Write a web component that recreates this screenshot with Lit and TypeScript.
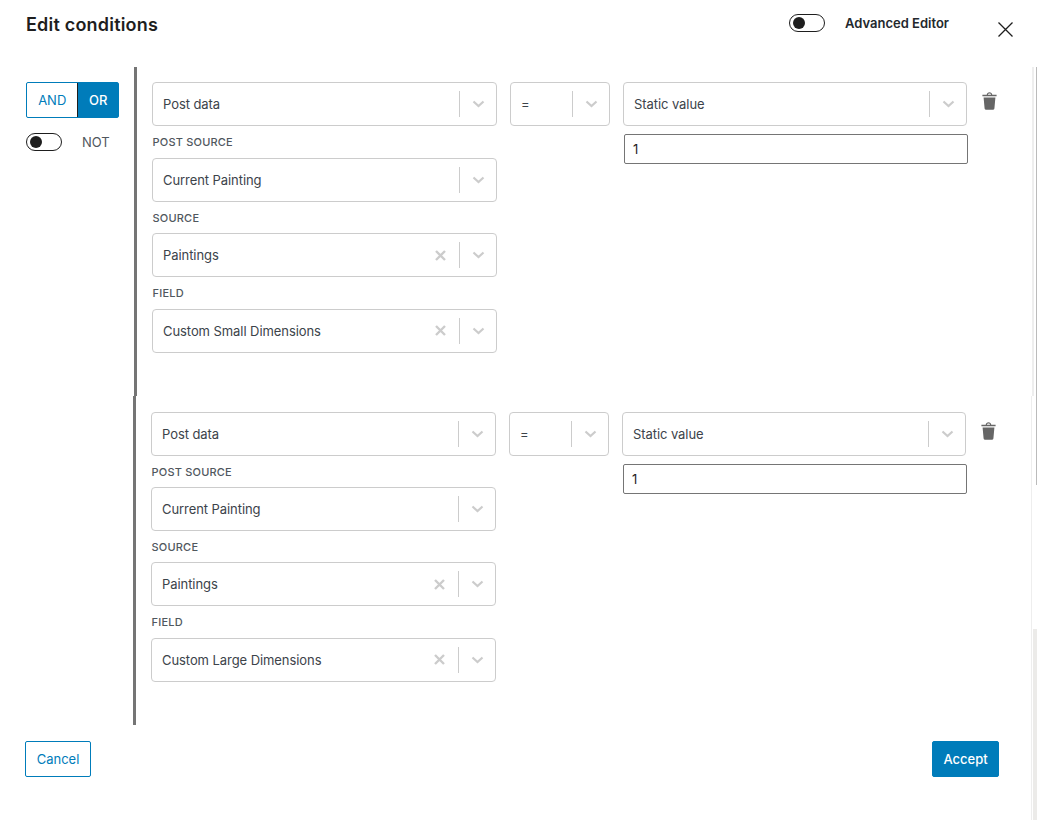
import { LitElement, html, css, nothing } from 'lit';
import { customElement, property } from 'lit/decorators.js';

@customElement('cond-select')
export class CondSelect extends LitElement {
  @property() value = '';
  @property({ type: Boolean }) clearable = false;

  static styles = css`
    :host {
      display: flex;
      align-items: center;
      box-sizing: border-box;
      height: 44px;
      padding: 0 11px 0 10px;
      border: 1px solid #ccc;
      border-radius: 4px;
      background: #fff;
      color: #3c434a;
      font-size: 13px;
      letter-spacing: -0.07px;
    }
    .val {
      flex: 1;
      white-space: nowrap;
    }
    .clear {
      display: block;
      margin-right: 13px;
    }
    .sep {
      width: 1px;
      height: 26px;
      background: #ccc;
      margin-right: 12px;
    }
    .arrow {
      display: block;
    }
  `;

  render() {
    return html`
      <span class="val">${this.value}</span>
      ${this.clearable
        ? html`<svg class="clear" width="11" height="11" viewBox="0 0 11 11">
            <path d="M1 1l9 9M10 1l-9 9" stroke="#ccc" stroke-width="2.4" fill="none" />
          </svg>`
        : nothing}
      <span class="sep"></span>
      <svg class="arrow" width="13" height="8" viewBox="0 0 13 8">
        <path d="M1.5 1.5l5 4.6 5-4.6" stroke="#ccc" stroke-width="2.2" fill="none" />
      </svg>
    `;
  }
}

@customElement('cond-toggle')
export class CondToggle extends LitElement {
  static styles = css`
    :host {
      display: block;
      box-sizing: border-box;
      width: 36px;
      height: 18px;
      padding: 2px;
      border: 1px solid #1e1e1e;
      border-radius: 9px;
      background: #fff;
    }
    i {
      display: block;
      width: 12px;
      height: 12px;
      margin-left: 1px;
      border-radius: 50%;
      background: #1e1e1e;
    }
  `;

  render() {
    return html`<i></i>`;
  }
}

@customElement('cond-group')
export class CondGroup extends LitElement {
  @property() field = '';

  static styles = css`
    :host {
      display: grid;
      grid-template-columns: 345px 100px 345px 30px;
      column-gap: 13px;
      align-items: start;
      box-sizing: border-box;
      height: 329.2px;
      padding-top: 15.4px;
      padding-left: 15px;
      border-left: 3px solid #757575;
    }
    :host(.second) {
      margin-left: -1px;
    }
    .col {
      display: flex;
      flex-direction: column;
    }
    label {
      display: block;
      margin: 10px 0 9.4px;
      padding-left: 0.5px;
      height: 12px;
      font-size: 11px;
      line-height: 12px;
      font-weight: 500;
      letter-spacing: 0.2px;
      text-transform: uppercase;
      color: #50575e;
    }
    .value {
      margin-right: 1px;
    }
    .static {
      box-sizing: border-box;
      width: 344px;
      height: 30px;
      margin: 8px 0 0 1px;
      padding-left: 8px;
      border: 1px solid #757575;
      border-radius: 2px;
      font-size: 13px;
      line-height: 28px;
      color: #1e1e1e;
    }
    .trash {
      display: block;
      margin: 10px 0 0 1px;
    }
  `;

  render() {
    return html`
      <div class="col">
        <cond-select value="Post data"></cond-select>
        <label>Post source</label>
        <cond-select value="Current Painting"></cond-select>
        <label>Source</label>
        <cond-select value="Paintings" clearable></cond-select>
        <label>Field</label>
        <cond-select value=${this.field} clearable></cond-select>
      </div>
      <cond-select value="="></cond-select>
      <div class="col">
        <cond-select class="value" value="Static value"></cond-select>
        <div class="static">1</div>
      </div>
      <svg class="trash" width="15" height="18" viewBox="0 0 15 18">
        <path
          fill="#666"
          d="M1.6 5.4h11.8l-1 11.2a1.2 1.2 0 0 1-1.2 1.1H3.8a1.2 1.2 0 0 1-1.2-1.1zM.4 2.8h4.3C4.9 1.2 6 .3 7.5.3s2.6.9 2.8 2.5h4.3v1.5H.4zM5.9 2.8h3.2c-.2-.7-.8-1.2-1.6-1.2s-1.4.5-1.6 1.2z"
          fill-rule="evenodd"
        />
      </svg>
    `;
  }
}

@customElement('app-root')
export class AppRoot extends LitElement {
  static styles = css`
    :host {
      display: block;
      position: relative;
      height: 820px;
      overflow: hidden;
      background: #fff;
      font-family: Inter, 'Liberation Sans', sans-serif;
      color: #1e1e1e;
    }
    .head {
      display: flex;
      align-items: flex-start;
      height: 67px;
      box-sizing: border-box;
      padding: 14px 24px 0 26px;
    }
    h1 {
      flex: 1;
      margin: 0;
      font-size: 18px;
      line-height: 22px;
      font-weight: 600;
      letter-spacing: 0.2px;
    }
    .adv {
      margin: 0 48px 0 20px;
      font-size: 13px;
      line-height: 18px;
      font-weight: 600;
      color: #23282d;
    }
    .close {
      display: block;
      margin-top: 8px;
    }
    .main {
      display: flex;
      height: 658px;
    }
    .side {
      box-sizing: border-box;
      width: 134px;
      padding: 15px 0 0 26px;
    }
    .andor {
      display: flex;
      width: 93px;
      height: 36px;
      box-sizing: border-box;
      border: 1px solid #007cba;
      border-radius: 2px;
      font-size: 13px;
      line-height: 34px;
      text-align: center;
      color: #007cba;
    }
    .andor span {
      width: 51px;
    }
    .andor .on {
      width: 40px;
      background: #007cba;
      color: #fff;
      font-weight: 500;
      border-left: 1px solid #1e1e1e;
    }
    .not {
      display: flex;
      align-items: center;
      gap: 20px;
      margin-top: 15px;
      font-size: 13px;
      color: #50575e;
    }
    .groups {
      flex: 1;
    }
    .foot {
      display: flex;
      justify-content: space-between;
      padding: 16px 38px 0 25px;
    }
    button {
      box-sizing: border-box;
      height: 36px;
      border: 1px solid #007cba;
      border-radius: 2px;
      background: #fff;
      color: #007cba;
      font: 400 13px Inter, 'Liberation Sans', sans-serif;
    }
    .cancel {
      width: 66px;
    }
    .accept {
      width: 67px;
      background: #007cba;
      color: #fff;
      font-weight: 500;
    }
    /* scrollbar remains along the right edge */
    .bar {
      position: absolute;
    }
    .edge-top {
      top: 67px;
      left: 1032px;
      width: 2px;
      height: 329px;
      background: #eee;
    }
    .edge-low {
      top: 396px;
      left: 1031px;
      width: 1px;
      height: 424px;
      background: #eee;
    }
    .thumb {
      top: 67px;
      left: 1036px;
      width: 1px;
      height: 418px;
      background: #bbb;
    }
    .track {
      top: 629px;
      left: 1033px;
      width: 4px;
      height: 191px;
      background: #ecebe9;
    }
  `;

  render() {
    return html`
      <div class="head">
        <h1>Edit conditions</h1>
        <cond-toggle></cond-toggle>
        <div class="adv">Advanced Editor</div>
        <svg class="close" width="16" height="16" viewBox="0 0 16 16">
          <path d="M1.5 .5l14 14M15.5 .5l-14 14" stroke="#1e1e1e" stroke-width="1.3" fill="none" />
        </svg>
      </div>
      <div class="main">
        <div class="side">
          <div class="andor"><span>AND</span><span class="on">OR</span></div>
          <div class="not"><cond-toggle></cond-toggle>NOT</div>
        </div>
        <div class="groups">
          <cond-group field="Custom Small Dimensions"></cond-group>
          <cond-group class="second" field="Custom Large Dimensions"></cond-group>
        </div>
      </div>
      <div class="foot">
        <button class="cancel">Cancel</button>
        <button class="accept">Accept</button>
      </div>
      <div class="bar edge-top"></div>
      <div class="bar edge-low"></div>
      <div class="bar thumb"></div>
      <div class="bar track"></div>
    `;
  }
}
